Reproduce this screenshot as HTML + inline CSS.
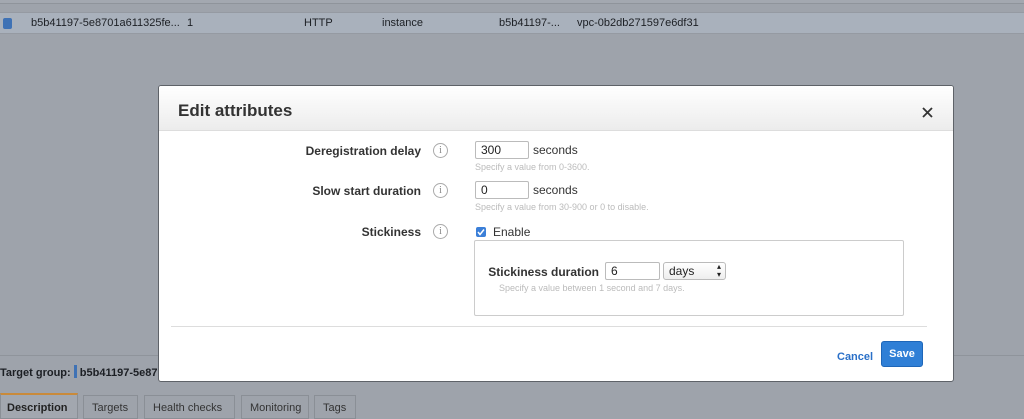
<!DOCTYPE html>
<html><head><meta charset="utf-8"><style>
*{box-sizing:border-box;margin:0;padding:0}
body{width:1024px;height:419px;overflow:hidden;background:#9ea3ab;font-family:"Liberation Sans",sans-serif;position:relative;color:#222}
.abs{position:absolute}
.row{left:0;top:12px;width:1024px;height:22px;background:#a9b1bc;border-top:1px solid #959aa2;border-bottom:1px solid #959aa2;font-size:11px;color:#1c1f24}
.row span{position:absolute;top:4px}
.modal{left:158px;top:85px;width:796px;height:297px;background:#fff;border:1px solid #5e6268;border-radius:3px;overflow:hidden}
.hdr{left:0;top:0;width:100%;height:45px;background:linear-gradient(#fff,#ececec);border-bottom:1px solid #ddd}
.hdr h1{position:absolute;left:19px;top:15px;font-size:17px;font-weight:bold;color:#333}
.lbl{font-size:12px;font-weight:bold;color:#333;text-align:right;width:200px}
.info{width:15px;height:15px;border:1px solid #aaa;border-radius:50%;font-size:10px;color:#888;text-align:center;line-height:13px;font-family:"Liberation Serif",serif}
.inp{height:18px;border:1px solid #bbb;border-radius:2px;font-size:12px;padding:1px 5px;background:#fff}
.t{font-size:12px;color:#333}
.hint{font-size:9px;color:#bbb}
.tab{top:395px;height:24px;border:1px solid #8a8f96;font-size:11px;padding:6px 8px;color:#333}
</style></head><body>
<div class="abs" style="left:0;top:0;width:1024px;height:4px;background:#a3a8b0;border-bottom:1px solid #8f949b"></div>
<div class="abs row">
<div style="position:absolute;left:3px;top:5px;width:9px;height:11px;background:#3f72b5;border-radius:2px"></div>
<span style="left:31px">b5b41197-5e8701a611325fe...</span>
<span style="left:187px">1</span>
<span style="left:304px">HTTP</span>
<span style="left:382px">instance</span>
<span style="left:499px">b5b41197-...</span>
<span style="left:577px">vpc-0b2db271597e6df31</span>
</div>
<div class="abs" style="left:0;top:355px;width:1024px;height:1px;background:#8f949b"></div>
<div class="abs" style="left:0;top:365px;font-size:11px;color:#1c1f24;font-weight:bold">Target group: <span style="display:inline-block;width:3px;height:13px;background:#3f72b5;vertical-align:-2px"></span> b5b41197-5e87</div>
<div class="abs" style="left:0;top:393px;width:78px;height:26px;background:#a2a7af;border:1px solid #8a8f96;border-top:2px solid #c98a3a;font-size:11px;font-weight:bold;padding:7px 6px;color:#222">Description</div>
<div class="abs tab" style="left:83px;width:55px">Targets</div>
<div class="abs tab" style="left:144px;width:91px">Health checks</div>
<div class="abs tab" style="left:241px;width:68px">Monitoring</div>
<div class="abs tab" style="left:314px;width:42px">Tags</div>

<div class="abs modal">
<div class="abs hdr"><h1>Edit attributes</h1>
<svg style="position:absolute;left:763px;top:21px" width="11" height="11"><path d="M1 1L10 10M10 1L1 10" stroke="#333" stroke-width="1.8"/></svg></div>

<div class="abs lbl" style="left:62px;top:58px">Deregistration delay</div>
<div class="abs info" style="left:274px;top:57px">i</div>
<div class="abs inp" style="left:316px;top:55px;width:54px">300</div>
<div class="abs t" style="left:374px;top:57px">seconds</div>
<div class="abs hint" style="left:316px;top:76px">Specify a value from 0-3600.</div>

<div class="abs lbl" style="left:62px;top:98px">Slow start duration</div>
<div class="abs info" style="left:274px;top:97px">i</div>
<div class="abs inp" style="left:316px;top:95px;width:54px">0</div>
<div class="abs t" style="left:374px;top:97px">seconds</div>
<div class="abs hint" style="left:316px;top:116px">Specify a value from 30-900 or 0 to disable.</div>

<div class="abs lbl" style="left:62px;top:139px">Stickiness</div>
<div class="abs info" style="left:274px;top:138px">i</div>
<div class="abs" style="left:317px;top:141px;width:10px;height:10px;background:#3b7fd8;border-radius:2px"><svg width="10" height="10" style="display:block"><path d="M2 5L4 7.5L8 2.5" stroke="#fff" stroke-width="1.5" fill="none"/></svg></div>
<div class="abs t" style="left:334px;top:139px">Enable</div>
<div class="abs" style="left:315px;top:154px;width:430px;height:76px;border:1px solid #ccc;border-radius:2px"></div>
<div class="abs lbl" style="left:240px;top:179px">Stickiness duration</div>
<div class="abs inp" style="left:446px;top:176px;width:55px">6</div>
<div class="abs inp" style="left:504px;top:176px;width:63px;background:linear-gradient(#fff,#eee);border-radius:3px">days<span style="position:absolute;right:4px;top:0;font-size:8px;line-height:8px">▴<br>▾</span></div>
<div class="abs hint" style="left:340px;top:197px">Specify a value between 1 second and 7 days.</div>

<div class="abs" style="left:12px;top:240px;width:756px;height:1px;background:#ddd"></div>
<div class="abs" style="left:678px;top:265px;font-size:11px;font-weight:bold;color:#2a70c8">Cancel</div>
<div class="abs" style="left:722px;top:255px;width:42px;height:26px;background:#2f7fd6;border:1px solid #1e66b8;border-radius:3px;color:#fff;font-size:11px;font-weight:bold;text-align:center;line-height:24px">Save</div>
</div>
</body></html>
